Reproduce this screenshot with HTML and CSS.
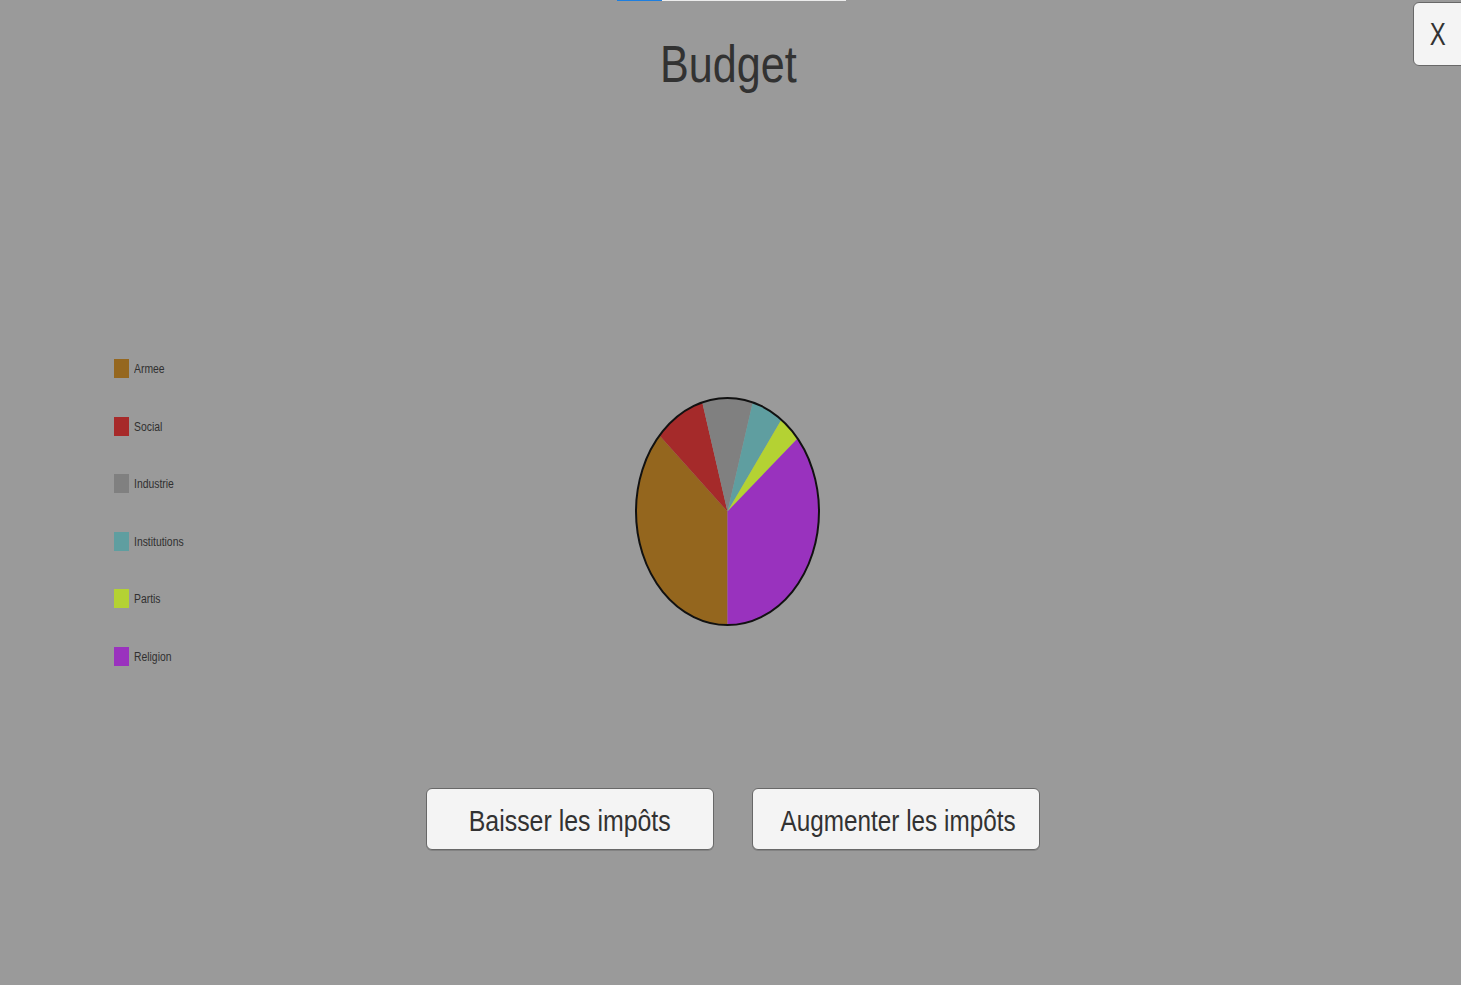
FILE: index.html
```html
<!DOCTYPE html>
<html lang="fr">
<head>
<meta charset="utf-8">
<title>Budget</title>
<link rel="stylesheet" href="styles.css">
</head>
<body>
<div class="screen">
  <div class="progress"><div class="progress-fill"></div></div>
  <h1 class="title"><span class="sq">Budget</span></h1>
  <div class="middle">
    <ul class="legend">
      <li class="legend-item"><span class="swatch armee"></span><span class="legend-label">Armee</span></li>
      <li class="legend-item"><span class="swatch social"></span><span class="legend-label">Social</span></li>
      <li class="legend-item"><span class="swatch industrie"></span><span class="legend-label">Industrie</span></li>
      <li class="legend-item"><span class="swatch institutions"></span><span class="legend-label">Institutions</span></li>
      <li class="legend-item"><span class="swatch partis"></span><span class="legend-label">Partis</span></li>
      <li class="legend-item"><span class="swatch religion"></span><span class="legend-label">Religion</span></li>
    </ul>
    <svg class="pie" width="187" height="231" viewBox="0 0 187 231">
      <path class="s-armee" d="M92.5 114.5 L92.5 228 A91.5 113.5 0 0 1 24.5 38.6 Z"/>
      <path class="s-social" d="M92.5 114.5 L24.5 38.6 A91.5 113.5 0 0 1 67.3 5.4 Z"/>
      <path class="s-industrie" d="M92.5 114.5 L67.3 5.4 A91.5 113.5 0 0 1 117.7 5.4 Z"/>
      <path class="s-institutions" d="M92.5 114.5 L117.7 5.4 A91.5 113.5 0 0 1 146.3 22.7 Z"/>
      <path class="s-partis" d="M92.5 114.5 L146.3 22.7 A91.5 113.5 0 0 1 162.6 41.5 Z"/>
      <path class="s-religion" d="M92.5 114.5 L162.6 41.5 A91.5 113.5 0 0 1 92.5 228 Z"/>
      <ellipse class="pie-outline" cx="92.5" cy="114.5" rx="91.5" ry="113.5"/>
    </svg>
  </div>
  <div class="actions">
    <button class="btn"><span class="sq">Baisser les impôts</span></button>
    <button class="btn"><span class="sq btn-wide">Augmenter les impôts</span></button>
  </div>
  <button class="close"><span class="sq-x">X</span></button>
</div>
</body>
</html>
```

FILE: styles.css
```css
html, body {
  margin: 0;
  padding: 0;
}
body {
  background: #9a9a9a;
  font-family: "Liberation Sans", Arial, sans-serif;
  color: #323232;
  overflow: hidden;
}
.screen {
  position: relative;
  width: 1461px;
  height: 985px;
}
.progress {
  margin-left: 617px;
  width: 229px;
  height: 1px;
  background: #ececec;
}
.progress-fill {
  width: 45px;
  height: 1px;
  background: #1e7fe0;
}
.sq {
  display: inline-block;
  transform: scaleX(0.83);
  transform-origin: center;
  white-space: nowrap;
}
.title {
  margin: 37px 0 0 0;
  font-size: 52px;
  line-height: 52px;
  font-weight: normal;
  text-align: center;
  width: 1456px;
}
.middle {
  display: flex;
  align-items: flex-start;
  height: 697px;
}
.legend {
  list-style: none;
  margin: 269px 0 0 0;
  padding: 0 0 0 114px;
  width: 521px;
  box-sizing: border-box;
  display: flex;
  flex-direction: column;
  gap: 38.5px;
}
.legend-item {
  display: flex;
  align-items: center;
  height: 19px;
}
.swatch {
  width: 15px;
  height: 19px;
  margin-right: 5px;
  flex: none;
}
.legend-label {
  font-size: 12.5px;
  display: inline-block;
  transform: scaleX(0.83);
  transform-origin: left center;
  white-space: nowrap;
  color: #303030;
  padding-top: 1px;
}
.armee { background: #95671f; }
.social { background: #a72a2a; }
.industrie { background: #808080; }
.institutions { background: #5f9ea0; }
.partis { background: #b4d233; }
.religion { background: #9a32be; }
.pie {
  display: block;
  margin-top: 307px;
  margin-left: 114px;
}
.s-armee { fill: #94661e; }
.s-social { fill: #a52a2a; }
.s-industrie { fill: #808080; }
.s-institutions { fill: #5f9ea0; }
.s-partis { fill: #b4d233; }
.s-religion { fill: #9932be; }
.pie-outline {
  fill: none;
  stroke: #111;
  stroke-width: 2;
}
.actions {
  display: flex;
  gap: 38px;
  padding-left: 426px;
  margin-top: 1px;
}
.btn {
  width: 288px;
  height: 62px;
  margin: 0;
  padding: 4px 0 0 0;
  border: 1.5px solid #686868;
  border-radius: 6px;
  background: #f4f4f4;
  box-shadow: 0 1px 0 rgba(0,0,0,0.15);
  font-family: "Liberation Sans", Arial, sans-serif;
  font-size: 30px;
  color: #323232;
  box-sizing: border-box;
}
.btn-wide {
  transform: scaleX(0.81);
}
.close {
  position: absolute;
  top: 2px;
  left: 1413px;
  width: 56px;
  height: 64px;
  padding: 0 6px 0 0;
  margin: 0;
  border: 1.5px solid #686868;
  border-radius: 6px;
  background: #f4f4f4;
  font-family: "Liberation Sans", Arial, sans-serif;
  font-size: 32px;
  color: #323232;
  box-sizing: border-box;
}
.sq-x {
  display: inline-block;
  transform: scaleX(0.75);
}
```
